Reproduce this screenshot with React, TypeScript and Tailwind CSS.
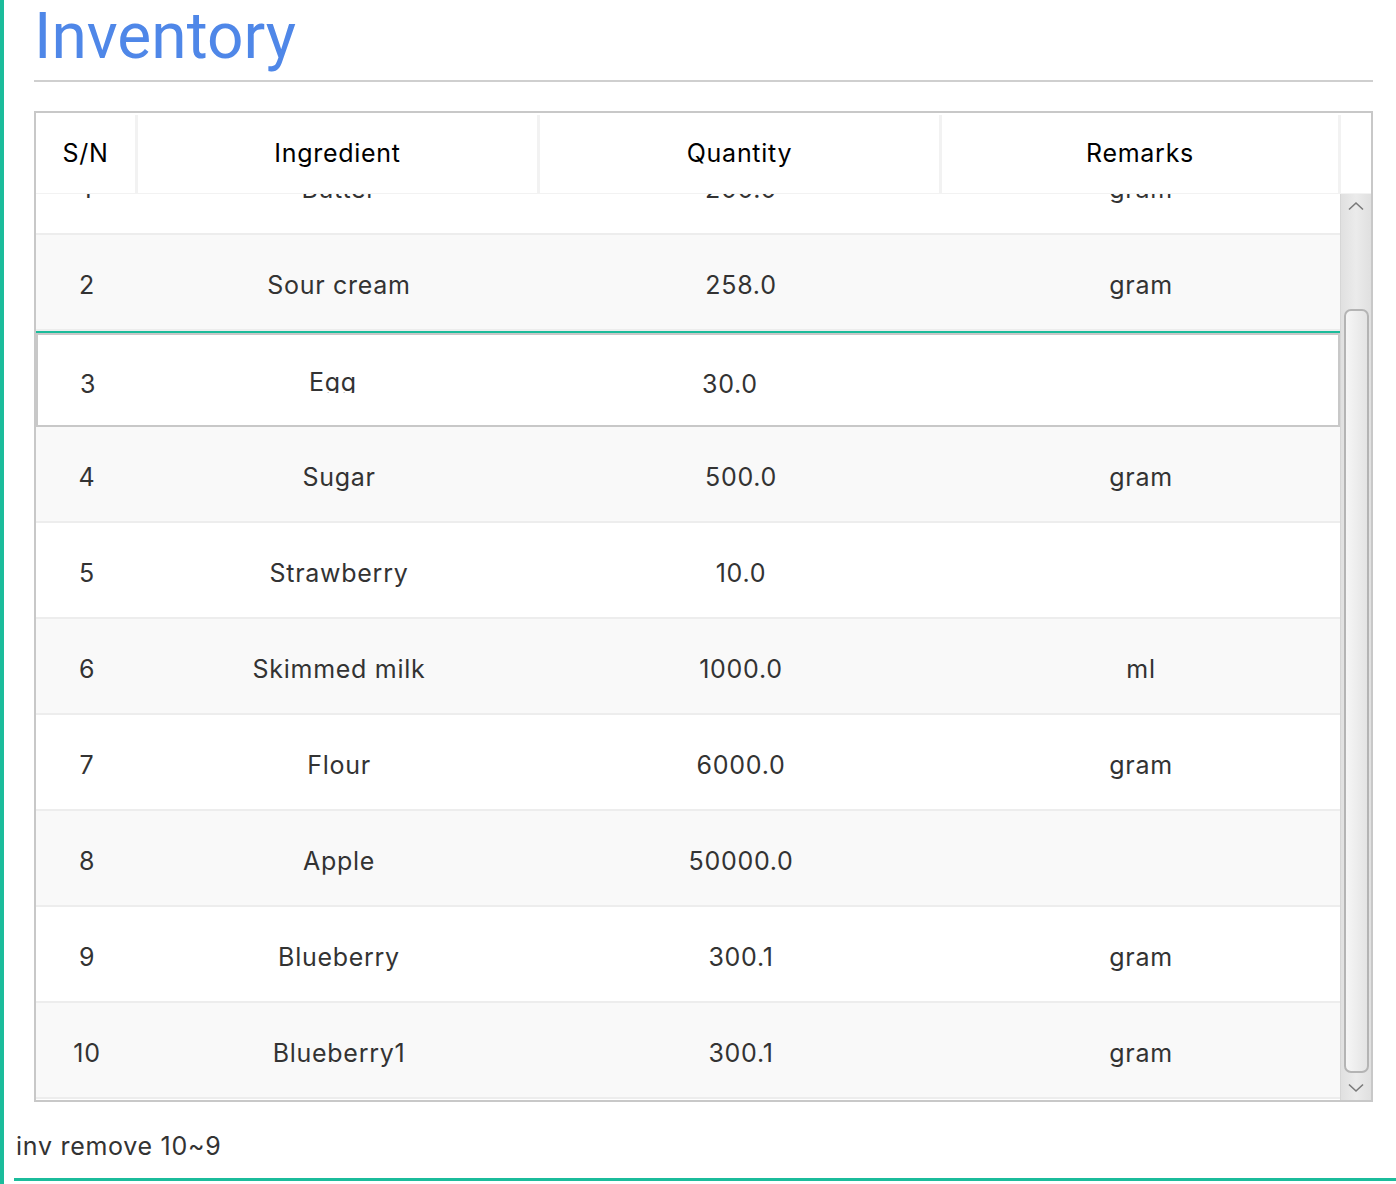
import React from 'react'

const rows = [
  { sn: '1', name: 'Butter', qty: '200.0', unit: 'gram' },
  { sn: '2', name: 'Sour cream', qty: '258.0', unit: 'gram' },
  { sn: '3', name: 'Egg', qty: '30.0', unit: '', editing: true },
  { sn: '4', name: 'Sugar', qty: '500.0', unit: 'gram' },
  { sn: '5', name: 'Strawberry', qty: '10.0', unit: '' },
  { sn: '6', name: 'Skimmed milk', qty: '1000.0', unit: 'ml' },
  { sn: '7', name: 'Flour', qty: '6000.0', unit: 'gram' },
  { sn: '8', name: 'Apple', qty: '50000.0', unit: '' },
  { sn: '9', name: 'Blueberry', qty: '300.1', unit: 'gram' },
  { sn: '10', name: 'Blueberry1', qty: '300.1', unit: 'gram' },
]

function Row({ r, i }: { r: (typeof rows)[number]; i: number }) {
  const bg = i % 2 === 1 ? 'bg-[#f9f9f9]' : 'bg-white'
  if (r.editing) {
    return (
      <div className="flex h-[96px] border-t-2 border-[#1bbc9b]">
        <div className="flex flex-1 items-center border-2 border-[#c8c8c8] bg-white pt-[10px]">
          <div className="w-[100px] text-center">{r.sn}</div>
          <div className="w-[402px] pl-[171px]">
            <span className="inline-block h-[27px] overflow-hidden leading-[32px]">{r.name}</span>
          </div>
          <div className="w-[402px] pl-[162px]">{r.qty}</div>
          <div className="flex-1" />
        </div>
      </div>
    )
  }
  return (
    <div className={`flex h-[96px] items-center border-b-2 border-[#ededed] pt-[7px] ${bg}`}>
      <div className="w-[102px] text-center">{r.sn}</div>
      <div className="w-[402px] text-center">{r.name}</div>
      <div className="w-[402px] text-center">{r.qty}</div>
      <div className="flex-1 text-center">{r.unit}</div>
    </div>
  )
}

export default function App() {
  return (
    <div
      className="flex h-[1184px] w-[1396px] flex-col overflow-hidden border-l-4 border-[#1bbc9b] bg-white text-[#333] tracking-[0.045em]"
      style={{ fontFamily: 'Inter, "Noto Sans", sans-serif' }}
    >
      <div className="pl-[30px] pr-[23px]">
        <h1
          className="border-b-2 border-[#cfcfcf] pb-[6px] text-[64px] leading-[74px] tracking-normal text-[#4f87e8]"
          style={{ fontFamily: 'Roboto, "Liberation Sans", sans-serif' }}
        >
          Inventory
        </h1>

        <div className="mt-[29px] flex h-[991px] flex-col border-2 border-[#c8c8c8] text-[25px]">
          {/* header */}
          <div className="flex h-[81px] border-b border-[#f2f2f2] pt-[2px] text-black">
            <div className="flex w-[102px] items-center justify-center border-r-[3px] border-[#f2f2f2]">S/N</div>
            <div className="flex w-[402px] items-center justify-center border-r-[3px] border-[#f2f2f2]">Ingredient</div>
            <div className="flex w-[402px] items-center justify-center border-r-[3px] border-[#f2f2f2]">Quantity</div>
            <div className="flex w-[399px] items-center justify-center border-r-[3px] border-[#f2f2f2]">Remarks</div>
            <div className="flex-1" />
          </div>

          {/* body */}
          <div className="flex min-h-0 flex-1">
            <div className="min-w-0 flex-1 overflow-hidden">
              <div className="-mt-[55px]">
                {rows.map((r, i) => (
                  <Row key={r.sn} r={r} i={i} />
                ))}
              </div>
            </div>

            {/* scrollbar */}
            <div className="flex w-[31px] flex-col items-center border-l border-[#d6d6d6] bg-gradient-to-r from-[#e0e0e0] via-[#ebebeb] to-[#e0e0e0]">
              <svg width="18" height="10" viewBox="0 0 18 10" className="mt-[7px]">
                <path d="M2 8.5 L9 2 L16 8.5" fill="none" stroke="#7a7a7a" strokeWidth="1.6" />
              </svg>
              <div className="mt-[98px] h-[764px] w-[25px] rounded-[7px] border-2 border-[#b4b4b4] bg-gradient-to-r from-[#f6f6f6] to-[#e4e4e4]" />
              <svg width="18" height="10" viewBox="0 0 18 10" className="mt-[10px]">
                <path d="M2 1.5 L9 8 L16 1.5" fill="none" stroke="#7a7a7a" strokeWidth="1.6" />
              </svg>
            </div>
          </div>
        </div>
      </div>

      <div className="ml-[10px] mt-[24px] border-b-[3px] border-[#1bbc9b] pb-[12px] pl-[2px] text-[25px] leading-[40px]">
        inv remove 10~9
      </div>
    </div>
  )
}
